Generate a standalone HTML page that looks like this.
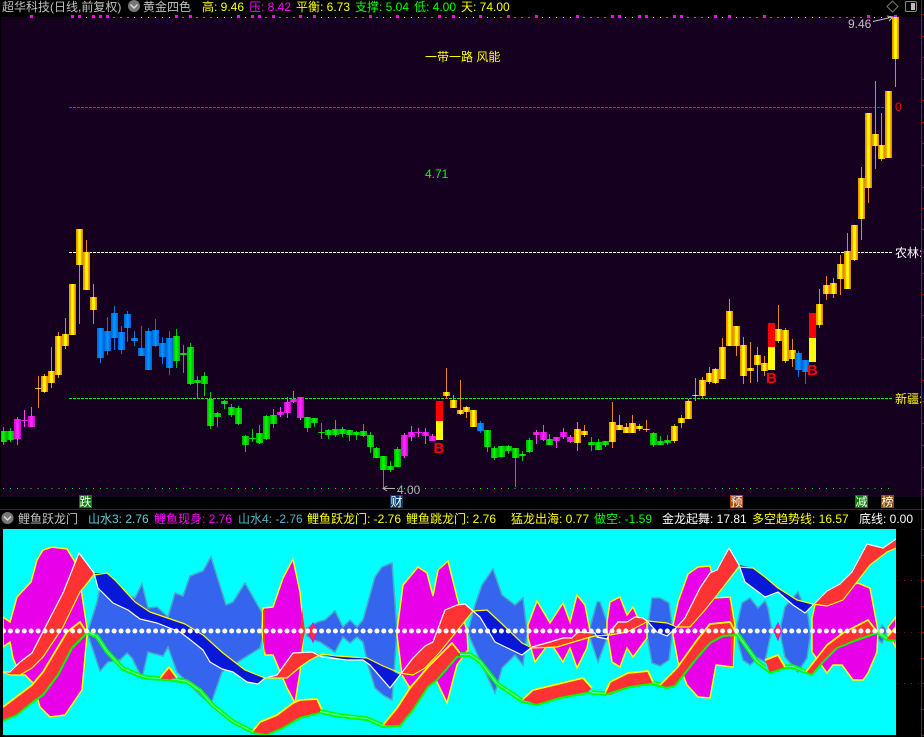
<!DOCTYPE html>
<html><head><meta charset="utf-8"><style>
html,body{margin:0;padding:0;background:#000;width:924px;height:737px;overflow:hidden}
svg{display:block}
text{font:12px "Liberation Sans","WenQuanYi Zen Hei","Noto Sans CJK SC",sans-serif}
.c rect{width:7px}
.w{fill:none;stroke-width:1;shape-rendering:crispEdges}
polyline{stroke-linejoin:round}
</style></head><body>
<svg width="924" height="737" viewBox="0 0 924 737" xmlns="http://www.w3.org/2000/svg">
<defs>
<linearGradient id="gg"><stop offset="0" stop-color="#e09000"/><stop offset=".28" stop-color="#ffb400"/><stop offset=".36" stop-color="#ff0"/><stop offset=".64" stop-color="#ff0"/><stop offset=".72" stop-color="#ffb400"/><stop offset="1" stop-color="#d08000"/></linearGradient>
<linearGradient id="gm"><stop offset="0" stop-color="#d000d0"/><stop offset=".5" stop-color="#ff30ff"/><stop offset="1" stop-color="#d000d0"/></linearGradient>
<linearGradient id="gl"><stop offset="0" stop-color="#00a800"/><stop offset=".45" stop-color="#0f0"/><stop offset="1" stop-color="#00a800"/></linearGradient>
<linearGradient id="gb"><stop offset="0" stop-color="#0060d8"/><stop offset=".5" stop-color="#0098ff"/><stop offset="1" stop-color="#0060d8"/></linearGradient>
</defs>
<rect width="924" height="737" fill="#000"/>
<rect x="1" y="17" width="923" height="480" fill="#15001f"/>

<!-- guide lines -->
<g fill="none" shape-rendering="crispEdges">
<path d="M69 107.5H893" stroke="#e02020" stroke-dasharray="3 1"/>
<path d="M69 252.5H893" stroke="#fff" stroke-dasharray="3 1"/>
<path d="M69 398.5H893" stroke="#0f0" stroke-dasharray="3 1"/>
<path d="M3 488.5H893" stroke="#0f0" stroke-dasharray="1 5.915"/>
<path d="M72 17.5H896" stroke="#ff0" stroke-dasharray="1 5.915"/>
</g>
<g fill="#f0f">
<rect x="30" y="15" width="3" height="3"/><rect x="71" y="15" width="3" height="3"/><rect x="78" y="15" width="3" height="3"/><rect x="92" y="15" width="3" height="3"/><rect x="99" y="15" width="3" height="3"/><rect x="106" y="15" width="3" height="3"/><rect x="175" y="15" width="3" height="3"/><rect x="189" y="15" width="3" height="3"/><rect x="237" y="15" width="3" height="3"/><rect x="251" y="15" width="3" height="3"/><rect x="258" y="15" width="3" height="3"/><rect x="272" y="15" width="3" height="3"/><rect x="299" y="15" width="3" height="3"/><rect x="313" y="15" width="3" height="3"/><rect x="369" y="15" width="3" height="3"/><rect x="396" y="15" width="3" height="3"/><rect x="438" y="15" width="3" height="3"/><rect x="452" y="15" width="3" height="3"/><rect x="479" y="15" width="3" height="3"/><rect x="507" y="15" width="3" height="3"/><rect x="535" y="15" width="3" height="3"/><rect x="576" y="15" width="3" height="3"/><rect x="611" y="15" width="3" height="3"/><rect x="618" y="15" width="3" height="3"/><rect x="638" y="15" width="3" height="3"/><rect x="645" y="15" width="3" height="3"/><rect x="673" y="15" width="3" height="3"/><rect x="680" y="15" width="3" height="3"/><rect x="714" y="15" width="3" height="3"/><rect x="728" y="15" width="3" height="3"/><rect x="763" y="15" width="3" height="3"/><rect x="867" y="15" width="3" height="3"/><rect x="894" y="15" width="3" height="3"/>
</g>

<!-- wicks -->
<path class="w" stroke="#e8861c" d="M38.5 376V408M44.5 374V393M51.5 347V388M58.5 332V378M65.5 318V349M79.5 229V324M86.5 240V290M93.5 284V324M446.5 368V399M453.5 395V408M460.5 380V415M466.5 406V418M577.5 422V451M584.5 425V437M612.5 402V448M619.5 415V430M626.5 423V433M632.5 415V433M639.5 424V431M646.5 420V432M674.5 424V443M681.5 415V428M688.5 399V419M695.5 378V401M702.5 377V398M709.5 367V384M715.5 368V384M722.5 338V379M729.5 299V346M736.5 326V356M743.5 337V384M750.5 342V383M757.5 347V382M764.5 356V376M778.5 305V343M785.5 328V363M792.5 339V367M819.5 289V328M826.5 276V300M833.5 278V298M840.5 255V295M847.5 233V289M854.5 225V261M861.5 167V240M868.5 113V203M875.5 81V169M881.5 113V161M895.5 17V87"/>
<path class="w" stroke="#ff40ff" d="M17.5 417V445M24.5 410V427M31.5 407V427M280.5 407V417M287.5 397V418M293.5 391V403M300.5 397V420M404.5 433V458M411.5 426V441M418.5 428V437M425.5 428V444M432.5 434V441M536.5 430V444M543.5 425V441M556.5 437V448M563.5 428V439M570.5 435V443"/>
<path class="w" stroke="#0c0" d="M3.5 427V445M10.5 428V442M176.5 329V368M183.5 345V373M190.5 343V385M197.5 376V398M204.5 372V396M210.5 392V429M217.5 412V427M224.5 400V409M231.5 404V417M238.5 406V425M245.5 435V452M252.5 429V442M259.5 425V444M266.5 415V440M273.5 409V428M307.5 417V432M314.5 418V427M321.5 423V439M328.5 429V439M335.5 420V437M342.5 427V437M349.5 430V441M356.5 431V440M363.5 424V437M370.5 432V453M376.5 447V458M383.5 456V488M390.5 461V472M397.5 447V467M487.5 430V452M494.5 446V460M508.5 445V454M515.5 448V487M522.5 451V461M529.5 438V453M549.5 434V445M591.5 437V451M598.5 439V450M605.5 441V447M653.5 432V447M660.5 436V445M667.5 435V445"/>
<path class="w" stroke="#0078e0" d="M100.5 328V363M107.5 317V355M114.5 306V350M121.5 326V354M127.5 311V342M134.5 331V346M141.5 326V356M148.5 328V370M155.5 319V347M162.5 337V364M169.5 331V375M480.5 421V433M798.5 351V377M805.5 360V384"/>

<!-- bodies -->
<g class="c" fill="url(#gg)" shape-rendering="crispEdges">
<rect x="35" y="388" height="1"/><rect x="41" y="376" height="16"/><rect x="48" y="371" height="12"/><rect x="55" y="336" height="39"/><rect x="62" y="334" height="12"/><rect x="69" y="284" height="51"/><rect x="76" y="229" height="36"/><rect x="83" y="252" height="38"/><rect x="90" y="297" height="13"/><rect x="443" y="392" height="4"/><rect x="450" y="400" height="8"/><rect x="457" y="410" height="4"/><rect x="463" y="407" height="5"/><rect x="470" y="410" height="17"/><rect x="574" y="429" height="14"/><rect x="581" y="431" height="4"/><rect x="609" y="422" height="20"/><rect x="616" y="425" height="5"/><rect x="623" y="427" height="6"/><rect x="629" y="423" height="10"/><rect x="636" y="426" height="3"/><rect x="643" y="429" height="1"/><rect x="671" y="426" height="15"/><rect x="678" y="418" height="5"/><rect x="685" y="401" height="18"/><rect x="692" y="395" height="1"/><rect x="699" y="380" height="16"/><rect x="706" y="373" height="9"/><rect x="712" y="369" height="14"/><rect x="719" y="347" height="32"/><rect x="726" y="311" height="35"/><rect x="733" y="326" height="20"/><rect x="740" y="345" height="31"/><rect x="747" y="368" height="3"/><rect x="754" y="355" height="10"/><rect x="761" y="363" height="8"/><rect x="775" y="329" height="12"/><rect x="782" y="330" height="31"/><rect x="789" y="350" height="9"/><rect x="816" y="304" height="21"/><rect x="823" y="285" height="9"/><rect x="830" y="283" height="11"/><rect x="837" y="264" height="15"/><rect x="844" y="251" height="38"/><rect x="851" y="225" height="35"/><rect x="858" y="178" height="41"/><rect x="865" y="113" height="75"/><rect x="872" y="134" height="12"/><rect x="878" y="145" height="14"/><rect x="885" y="91" height="67"/><rect x="892" y="17" height="42"/>
</g>
<g class="c" fill="url(#gm)" shape-rendering="crispEdges">
<rect x="14" y="419" height="20"/><rect x="21" y="420" height="1"/><rect x="28" y="416" height="11"/><rect x="277" y="412" height="3"/><rect x="284" y="402" height="11"/><rect x="290" y="399" height="3"/><rect x="297" y="397" height="21"/><rect x="401" y="435" height="21"/><rect x="408" y="432" height="5"/><rect x="415" y="432" height="1"/><rect x="422" y="432" height="4"/><rect x="429" y="436" height="5"/><rect x="533" y="432" height="3"/><rect x="540" y="432" height="8"/><rect x="553" y="437" height="4"/><rect x="560" y="432" height="5"/><rect x="567" y="437" height="5"/>
</g>
<g class="c" fill="url(#gl)" shape-rendering="crispEdges">
<rect x="0" y="431" height="11"/><rect x="7" y="431" height="9"/><rect x="173" y="336" height="25"/><rect x="180" y="353" height="2"/><rect x="187" y="347" height="37"/><rect x="194" y="380" height="3"/><rect x="201" y="376" height="8"/><rect x="207" y="399" height="27"/><rect x="214" y="413" height="4"/><rect x="221" y="401" height="3"/><rect x="228" y="407" height="8"/><rect x="235" y="408" height="16"/><rect x="242" y="436" height="9"/><rect x="249" y="438" height="1"/><rect x="256" y="433" height="10"/><rect x="263" y="416" height="23"/><rect x="270" y="415" height="9"/><rect x="304" y="417" height="11"/><rect x="311" y="418" height="5"/><rect x="318" y="432" height="1"/><rect x="325" y="430" height="5"/><rect x="332" y="429" height="6"/><rect x="339" y="429" height="5"/><rect x="346" y="430" height="5"/><rect x="353" y="432" height="3"/><rect x="360" y="431" height="5"/><rect x="367" y="435" height="12"/><rect x="373" y="448" height="10"/><rect x="380" y="456" height="14"/><rect x="387" y="466" height="4"/><rect x="394" y="449" height="18"/><rect x="484" y="430" height="17"/><rect x="491" y="448" height="10"/><rect x="498" y="446" height="11"/><rect x="505" y="446" height="5"/><rect x="512" y="448" height="10"/><rect x="519" y="454" height="2"/><rect x="526" y="440" height="12"/><rect x="546" y="439" height="6"/><rect x="588" y="442" height="3"/><rect x="595" y="442" height="8"/><rect x="602" y="441" height="4"/><rect x="650" y="433" height="12"/><rect x="657" y="441" height="4"/><rect x="664" y="440" height="3"/>
</g>
<g class="c" fill="url(#gb)" shape-rendering="crispEdges">
<rect x="97" y="328" height="30"/><rect x="104" y="331" height="20"/><rect x="111" y="313" height="25"/><rect x="118" y="332" height="18"/><rect x="124" y="314" height="14"/><rect x="131" y="338" height="3"/><rect x="138" y="348" height="8"/><rect x="145" y="331" height="39"/><rect x="152" y="330" height="16"/><rect x="159" y="343" height="14"/><rect x="166" y="338" height="30"/><rect x="477" y="423" height="8"/><rect x="795" y="353" height="17"/><rect x="802" y="360" height="12"/>
</g>
<g class="c" shape-rendering="crispEdges">
<rect x="436" y="401" height="20" fill="#f00"/><rect x="436" y="421" height="19" fill="#ff0"/>
<rect x="768" y="323" height="24" fill="#f00"/><rect x="768" y="347" height="23" fill="#ff0"/>
<rect x="809" y="313" height="25" fill="#f00"/><rect x="809" y="338" height="24" fill="#ff0"/>
</g>
<rect x="0" y="17" width="1" height="480" fill="#000"/>

<!-- upper pane labels -->
<g fill="#f00"><text x="433.5" y="453" style="font-size:15px;font-weight:bold">B</text><text x="766" y="383" style="font-size:15px;font-weight:bold">B</text><text x="807" y="375" style="font-size:15px;font-weight:bold">B</text></g>
<text x="425" y="61" fill="#ff0">一带一路 风能</text>
<text x="425" y="178" fill="#0f0">4.71</text>
<text x="848" y="28" fill="#c0c0c0">9.46</text>
<path d="M873 21.5L893 17M887 16L893 17L889 21" fill="none" stroke="#c0c0c0"/>
<path d="M383 488.5H395M387 486L383 488.5L387 491" fill="none" stroke="#b0b0b0"/>
<text x="397" y="494" fill="#b0b0b0">4.00</text>
<text x="895" y="111" fill="#f00">0</text>
<text x="895" y="257" fill="#fff">农林:</text>
<text x="895" y="403" fill="#ff0">新疆:</text>

<!-- marker strip -->
<rect y="497" width="924" height="12" fill="#000"/>
<rect x="79" y="495" width="13" height="13" fill="#0a7a0a"/><text x="79.5" y="506" fill="#fff">跌</text>
<rect x="390" y="495" width="13" height="13" fill="#0a3a6a"/><text x="390.5" y="506" fill="#fff">财</text>
<rect x="730" y="495" width="13" height="13" fill="#a84a10"/><text x="730.5" y="506" fill="#fff">预</text>
<rect x="855" y="495" width="13" height="13" fill="#0a7a0a"/><text x="855.5" y="506" fill="#fff">减</text>
<rect x="881" y="495" width="13" height="13" fill="#8a4a10"/><text x="881.5" y="506" fill="#fff">榜</text>
<rect y="509" width="924" height="1" fill="#a00000"/>

<!-- top header -->
<text x="2" y="11" fill="#c0c0c0">超华科技(日线,前复权)</text>
<circle cx="134" cy="6" r="6" fill="#777"/><path d="M130.5 4.5L134 8L137.5 4.5" fill="none" stroke="#ddd" stroke-width="1.4"/>
<text x="143" y="11" fill="#c0c0c0">黄金四色</text>
<text x="202" y="11" fill="#ff0">高: 9.46</text>
<text x="249" y="11" fill="#f0f">压: 8.42</text>
<text x="296" y="11" fill="#ff0">平衡: 6.73</text>
<text x="355" y="11" fill="#0f0">支撑: 5.04</text>
<text x="414" y="11" fill="#0f0">低: 4.00</text>
<text x="461" y="11" fill="#ff0">天: 74.00</text>
<path d="M892.5 1L898 6.5L892.5 12L887 6.5Z" fill="none" stroke="#777"/>
<rect x="905.5" y="1.5" width="11" height="10" rx="1.5" fill="none" stroke="#888"/>
<rect x="911" y="3" width="4" height="7" fill="#bbb"/>

<!-- second header -->
<circle cx="7.5" cy="518" r="6" fill="#777"/><path d="M4 516.5L7.5 520L11 516.5" fill="none" stroke="#ddd" stroke-width="1.4"/>
<text x="18" y="523" fill="#c0c0c0">鲤鱼跃龙门</text>
<text x="88" y="523" fill="#5fd0e0">山水3: 2.76</text>
<text x="154" y="523" fill="#f0f">鲤鱼现身: 2.76</text>
<text x="238" y="523" fill="#50b8d0">山水4: -2.76</text>
<text x="307" y="523" fill="#ff0">鲤鱼跃龙门: -2.76</text>
<text x="406" y="523" fill="#ff0">鲤鱼跳龙门: 2.76</text>
<text x="511" y="523" fill="#ff0">猛龙出海: 0.77</text>
<text x="594" y="523" fill="#0f0">做空: -1.59</text>
<text x="662" y="523" fill="#fff">金龙起舞: 17.81</text>
<text x="752" y="523" fill="#ff0">多空趋势线: 16.57</text>
<text x="859" y="523" fill="#fff">底线: 0.00</text>

<!-- lower pane -->
<svg x="3" y="529" width="893" height="206" viewBox="3 529 893 206">
<rect x="3" y="529" width="893" height="206" fill="#0ff"/>
<g fill="#3565ee" stroke="#48a8c8" stroke-width="1.5">
<polygon points="88,631 97,602 100,588 135,598 142,584 148,608 157,607 168,617 175,593 183,596 190,576 203,571 211,557 226,605 233,602 245,583 262,613 264,632 260,648 222,672 213,698 211,705 200,695 190,685 177,672 168,647 163,656 148,652 142,678 132,658 127,653 120,660 108,662 100,671 88,635"/>
<polygon points="307,628 318,622 325,620 335,611 343,627 350,620 357,627 363,620 375,577 382,567 392,563 397,631 392,700 383,695 375,688 368,665 363,642 357,637 350,643 343,637 335,652 320,642 313,640 307,636"/>
<polygon points="468,631 475,605 482,585 493,569 502,595 515,605 523,598 527,631 527,635 523,665 515,655 502,668 495,693 482,665 470,638"/>
<polygon points="590,628 597,602 600,602 607,622 607,638 598,662 590,638"/>
<polygon points="648,625 652,598 660,598 669,603 672,625 672,635 669,660 660,666 652,663 647,635"/>
<polygon points="737,625 742,603 750,598 758,608 765,601 768,608 772,631 770,638 765,662 758,658 750,665 743,660 738,642"/>
<polygon points="781,625 785,607 798,592 808,615 810,631 810,638 807,658 798,672 785,657 781,638"/>
<polygon points="877,638 882,625 887,631 882,643"/>
</g>
<g fill="#e800e8" stroke="#ff0" stroke-width="1.5">
<polygon points="3,617 10,622 17,597 31,582 37,560 43,550 52,547 67,549 75,562 80,582 87,628 87,635 82,690 65,715 50,717 40,707 33,683 25,675 20,675 13,658 10,642 3,647"/>
<polygon points="263,608 273,607 283,578 293,559 300,592 304,631 300,672 295,703 287,688 273,655 265,655 262,631"/>
<polygon points="397,631 403,585 418,567 427,573 433,596 438,570 448,561 457,597 467,631 468,650 457,665 447,703 437,682 433,672 410,688 402,675 397,635"/>
<polygon points="528,625 537,601 550,623 563,603 570,622 577,595 585,605 590,631 587,648 577,668 570,648 563,662 550,642 535,662 528,638"/>
<polygon points="607,622 610,602 620,597 627,615 633,607 638,618 647,622 647,638 633,657 627,648 620,667 612,662 607,631"/>
<polygon points="673,625 678,602 688,574 698,567 710,566 712,575 715,598 730,597 735,625 733,667 716,665 710,698 698,697 687,685 678,662 673,635"/>
<polygon points="812,618 815,605 837,590 858,583 870,588 877,625 878,631 877,652 868,673 863,680 853,680 842,665 833,665 827,673 812,652"/>
<polygon points="888,627 896,617 896,648 892,640"/>
</g>
<g fill="#ff3333">
<polygon points="302,608 305,631 301,652 300,631"/>
<polygon points="313,623 317,631 313,642 308,631" stroke="#e800e8"/>
<polygon points="778,623 781,631 778,640 774,631" stroke="#e800e8"/>
<polygon points="730,600 734,625 733,666 731,666"/>
<polygon points="263,610 265,610 265,654 263,640"/>
</g>
<!-- upper band -->
<g fill="#ff3333">
<polygon points="2,672 10,672 20,662 32,653 50,618 63,593 79,553 94,573 80,592 63,627 43,657 32,668 20,675 10,675"/>
<polygon points="265,678 277,675 293,653 308,653 312,652 322,655 310,660 300,667 287,678"/>
<polygon points="400,675 413,658 425,646 433,642 445,610 457,605 465,604 473,611 440,652 425,668 413,675"/>
<polygon points="532,647 550,642 563,638 572,638 578,632 595,633 587,638 557,647"/>
<polygon points="608,635 610,632 618,622 627,622 635,617 643,618 648,621 643,624 627,632"/>
<polygon points="677,627 685,618 700,588 710,573 717,570 729,548 739,565 717,595 705,610 690,627"/>
<polygon points="813,605 827,591 840,584 852,572 867,544 883,548 896,539 896,548 887,552 870,565 843,600 827,606"/>
</g>
<g fill="#0818d8">
<polygon points="94,573 98,588 113,603 128,610 140,619 157,623 180,632 188,638 203,650 210,662 222,669 233,672 247,682 258,684 265,678 245,670 223,653 203,635 185,624 150,612 135,602 115,580 107,573"/>
<polygon points="322,655 347,660 363,660 370,665 390,688 400,675 383,666 367,658 337,656"/>
<polygon points="473,611 480,617 495,642 522,655 532,647 522,643 500,622 487,610"/>
<polygon points="595,633 597,637 607,639 608,635"/>
<polygon points="648,621 657,632 667,636 677,627 667,623"/>
<polygon points="739,565 745,582 765,597 778,592 793,605 805,613 813,605 797,600 778,588 765,577 753,568"/>
</g>
<polyline fill="none" stroke="#fff" stroke-width="1.2" points="2,672 10,672 20,662 32,653 50,618 63,593 79,553 94,573 98,588 113,603 128,610 140,619 157,623 180,632 188,638 203,650 210,662 222,669 233,672 247,682 258,684 265,678 277,675 293,653 312,652 322,657 347,660 363,660 370,665 390,688 400,675 413,658 425,646 433,642 445,610 457,605 465,604 473,611 480,617 495,642 522,655 532,647 550,642 563,638 572,638 578,632 595,633 597,637 607,639 610,632 618,622 627,622 635,617 643,618 648,622 657,632 667,636 677,627 685,618 700,588 710,573 717,570 729,548 739,565 745,582 765,597 778,592 793,605 805,613 813,605 827,591 840,584 852,572 867,544 883,548 896,539"/>
<polyline fill="none" stroke="#ff0" stroke-width="1.2" points="2,672 10,675 20,675 32,668 43,657 63,627 80,592 94,575 107,573 115,580 135,602 150,612 185,624 203,635 223,653 245,670 265,678 287,678 300,667 310,660 322,654 337,656 367,658 383,666 400,673 413,675 425,668 440,652 473,611 487,610 500,622 522,643 532,648 557,647 587,638 595,636 610,635 627,632 643,624 648,621 667,623 677,627 690,627 705,610 717,595 739,567 753,568 765,577 778,588 797,600 813,604 827,606 843,600 870,565 887,552 896,548"/>
<!-- lower band -->
<g fill="#ff3333">
<polygon points="3,707 32,685 43,672 67,632 80,622 87,633 72,648 58,675 43,695 33,702 17,715 3,721"/>
<polygon points="160,678 169,667 177,678 167,680"/>
<polygon points="252,732 260,722 277,715 293,703 300,700 317,699 322,710 320,713 300,718 283,728 267,735 253,733"/>
<polygon points="383,725 397,708 410,688 428,667 452,643 460,653 457,657 437,680 428,687 413,710 400,726"/>
<polygon points="533,690 583,678 592,688 587,693 560,698 537,705 530,702 522,700"/>
<polygon points="605,693 610,682 628,673 648,671 653,682 650,684 630,687 610,695"/>
<polygon points="660,685 677,668 697,640 710,624 730,622 737,635 723,636 710,643 697,658 675,686 667,688"/>
<polygon points="765,660 778,655 785,667 770,673"/>
<polygon points="805,673 827,645 843,633 868,620 878,633 857,640 837,648 823,662 812,675"/>
<polygon points="887,637 896,627 896,641 887,640"/>
</g>
<g fill="none" stroke="#ff0" stroke-width="1.8">
<polyline points="3,707 32,685 43,672 67,632 80,622 87,633"/>
<polyline points="160,678 169,667 177,678"/>
<polyline points="252,732 260,722 277,715 293,703 300,700 317,699 322,710"/>
<polyline points="383,725 397,708 410,688 428,667 452,643 460,653"/>
<polyline points="522,700 533,690 583,678 592,688"/>
<polyline points="605,693 610,682 628,673 648,671 653,682"/>
<polyline points="660,685 677,668 697,640 710,624 730,622 737,635"/>
<polyline points="765,660 778,655 785,667"/>
<polyline points="805,673 827,645 843,633 868,620 878,633"/>
<polyline points="887,637 896,627"/>
</g>
<polyline fill="none" stroke="#0f0" stroke-width="2" points="3,721 17,715 33,702 43,695 58,675 72,648 87,633 97,638 107,653 123,670 140,677 147,679 167,680 187,683 200,692 213,707 233,723 253,733 267,735 283,728 300,718 320,713 340,717 367,720 383,727 400,726 413,710 428,687 437,680 457,657 470,656 480,663 497,685 522,702 537,705 560,698 587,693 605,695 630,687 650,684 667,688 675,686 697,658 710,643 723,636 737,635 757,663 770,673 785,668 793,668 812,675 823,662 837,648 857,640 877,633 887,640 897,641"/>
<g fill="none" stroke="#0f0" stroke-width="4.5" transform="translate(0,-1.5)">
<polyline points="87,633 97,638 107,653 123,670 140,677 147,679 160,680"/>
<polyline points="177,681 187,683 200,692 213,707 233,723 252,733"/>
<polyline points="320,713 340,717 367,720 383,727"/>
<polyline points="460,656 470,656 480,663 497,685 522,702"/>
<polyline points="592,694 605,695"/>
<polyline points="653,684 660,686"/>
<polyline points="737,635 757,663 765,669"/>
<polyline points="785,668 793,668 805,673"/>
<polyline points="878,634 887,640"/>
</g>
<g fill="none" stroke="#60ffb0" stroke-width="1.2" transform="translate(0,-1.5)">
<polyline points="87,633 97,638 107,653 123,670 140,677 147,679 160,680"/>
<polyline points="177,681 187,683 200,692 213,707 233,723 252,733"/>
<polyline points="320,713 340,717 367,720 383,727"/>
<polyline points="460,656 470,656 480,663 497,685 522,702"/>
<polyline points="592,694 605,695"/>
<polyline points="653,684 660,686"/>
<polyline points="737,635 757,663 765,669"/>
<polyline points="785,668 793,668 805,673"/>
<polyline points="878,634 887,640"/>
</g>
<line x1="3.5" y1="631" x2="897" y2="631" stroke="#fff" stroke-width="5" stroke-linecap="round" stroke-dasharray="0 6.915"/>
</svg>

<!-- right axis -->
<rect x="921" y="0" width="1" height="737" fill="#c00000"/>
<path shape-rendering="crispEdges" stroke="#c00000" fill="none" d="M921 14.5h3M921 36.5h3M921 57.5h3M921 79.5h3M921 100.5h3M921 122.5h3M921 143.5h3M921 165.5h3M921 187.5h3M921 208.5h3M921 229.5h3M921 251.5h3M921 273.5h3M921 294.5h3M921 315.5h3M921 337.5h3M921 359.5h3M921 380.5h3M921 401.5h3M921 423.5h3M921 445.5h3M921 467.5h3M921 489.5h3M921 529.5h3M921 555.5h3M921 580.5h3M921 606.5h3M921 632.5h3M921 658.5h3M921 683.5h3M921 709.5h3M921 735.5h3"/>
<path shape-rendering="crispEdges" stroke="#a00000" fill="none" stroke-dasharray="1 6" d="M897 580.5H921M897 632.5H921M897 683.5H921"/>
</svg>
</body></html>
